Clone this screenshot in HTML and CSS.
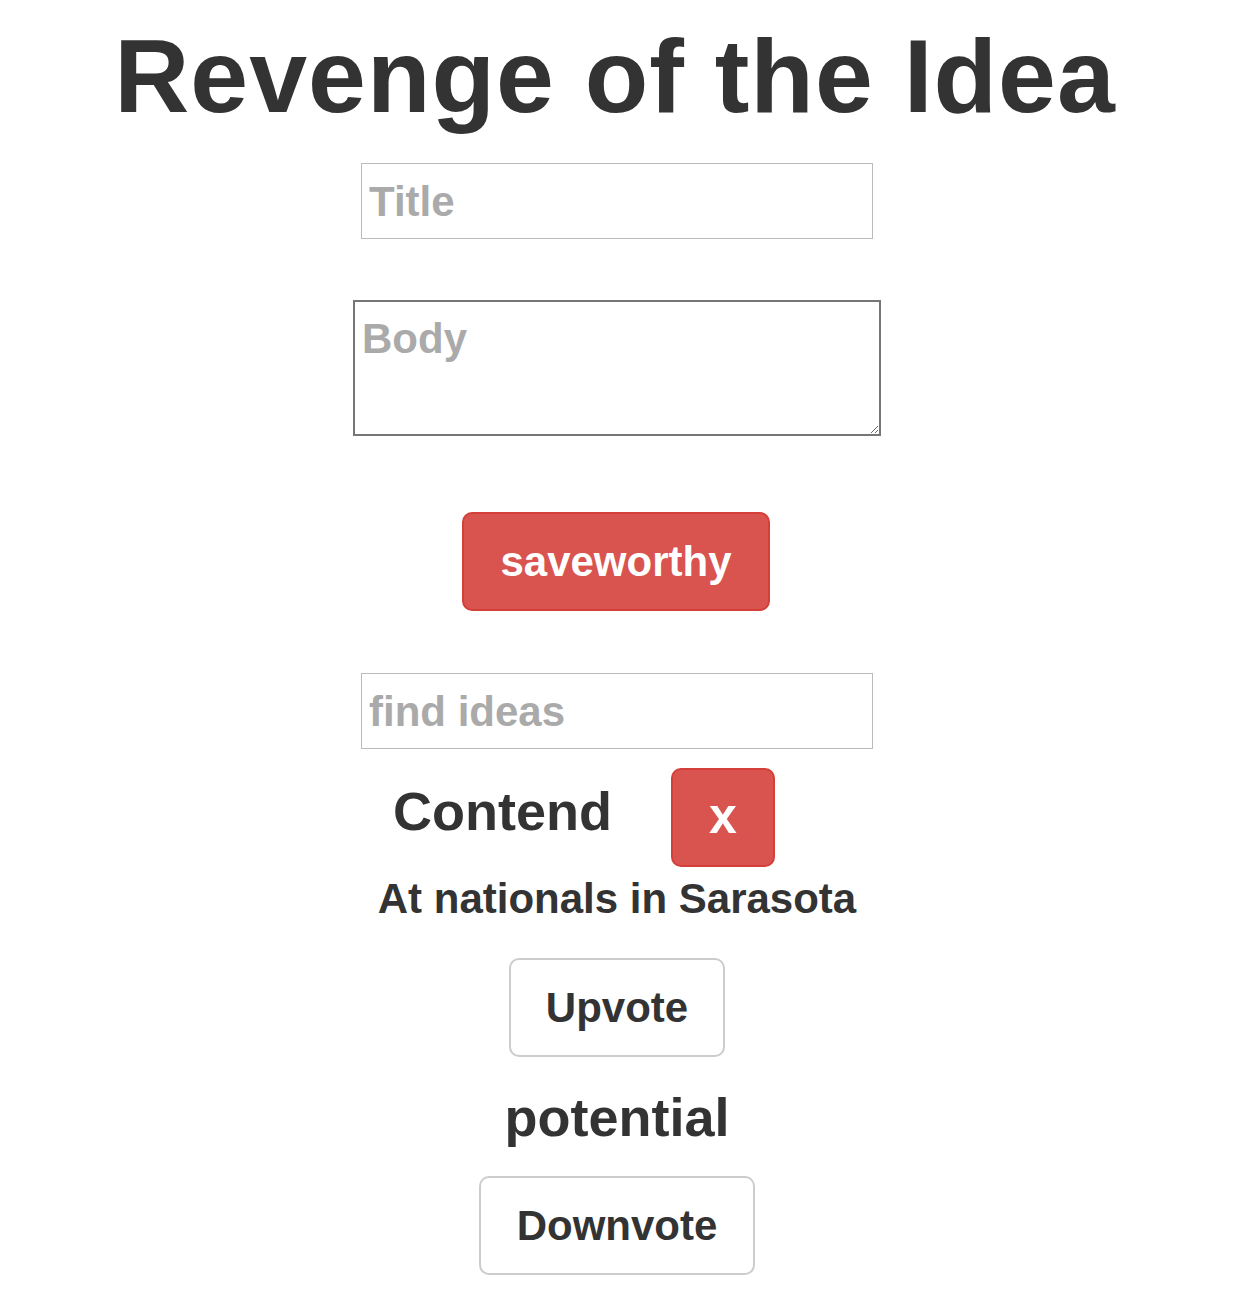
FILE: index.html
```html
<!DOCTYPE html>
<html>
<head>
<meta charset="utf-8">
<link rel="stylesheet" href="styles.css">
</head>
<body>
<main class="page">
  <h1 class="headline">Revenge of the Idea</h1>
  <input class="field title-field" type="text" placeholder="Title">
  <textarea class="body-field" placeholder="Body"></textarea>
  <button class="btn btn-danger save-btn">saveworthy</button>
  <input class="field search-field" type="text" placeholder="find ideas">
  <section class="idea">
    <div class="idea-head">
      <h2 class="idea-title">Contend</h2>
      <button class="btn btn-danger delete-btn">x</button>
    </div>
    <p class="idea-body">At nationals in Sarasota</p>
    <button class="btn btn-default vote-btn up-btn">Upvote</button>
    <h3 class="quality">potential</h3>
    <button class="btn btn-default vote-btn down-btn">Downvote</button>
  </section>
</main>
</body>
</html>
```

FILE: styles.css
```css
html, body {
  margin: 0;
  padding: 0;
  background: #fff;
}
body {
  font-family: "Liberation Sans", "DejaVu Sans", sans-serif;
  font-weight: bold;
  color: #333;
}
.page {
  display: flex;
  flex-direction: column;
  align-items: center;
  width: 1234px;
}
.headline {
  font-family: "Liberation Sans", sans-serif;
  font-size: 104px;
  line-height: 1;
  margin: 24px 0 0 -4px;
  letter-spacing: 1px;
  color: #333;
}
.field {
  box-sizing: border-box;
  width: 512px;
  height: 76px;
  border: 1px solid #bbb;
  padding: 2px 7px 0;
  font-family: inherit;
  font-weight: bold;
  font-size: 42px;
  color: #333;
  outline: none;
}
.field::placeholder, .body-field::placeholder {
  color: #aaa;
}
.title-field {
  margin-top: 35px;
}
.body-field {
  box-sizing: border-box;
  width: 528px;
  height: 136px;
  margin-top: 61px;
  border: 2px solid #767676;
  padding: 13px 7px 9px;
  font-family: inherit;
  font-weight: bold;
  font-size: 42px;
  color: #333;
  outline: none;
}
.btn {
  box-sizing: border-box;
  font-family: inherit;
  font-weight: bold;
  border-radius: 10px;
  cursor: pointer;
  padding: 0;
}
.btn-danger {
  background: #d9534f;
  border: 2px solid #d43f3a;
  color: #fff;
}
.btn-default {
  background: #fff;
  border: 2px solid #ccc;
  color: #333;
}
.save-btn {
  width: 308px;
  height: 99px;
  margin-top: 76px;
  margin-right: 2px;
  font-size: 42px;
}
.search-field {
  margin-top: 62px;
}
.idea {
  display: flex;
  flex-direction: column;
  align-items: center;
}
.idea-head {
  display: flex;
  align-items: flex-start;
  gap: 59px;
  margin-top: 19px;
  margin-right: 66px;
}
.idea-title {
  font-size: 54px;
  margin: 16px 0 0;
  line-height: 1;
}
.delete-btn {
  width: 104px;
  height: 99px;
  font-size: 50px;
  padding-bottom: 4px;
}
.idea-body {
  font-size: 42px;
  margin: 7px 0 0;
  line-height: 1.2;
}
.vote-btn {
  height: 99px;
  font-size: 42px;
}
.up-btn {
  width: 216px;
  margin-top: 34px;
}
.quality {
  font-size: 54px;
  margin: 28px 0 0;
  line-height: 1.2;
}
.down-btn {
  width: 276px;
  margin-top: 26px;
}
```
